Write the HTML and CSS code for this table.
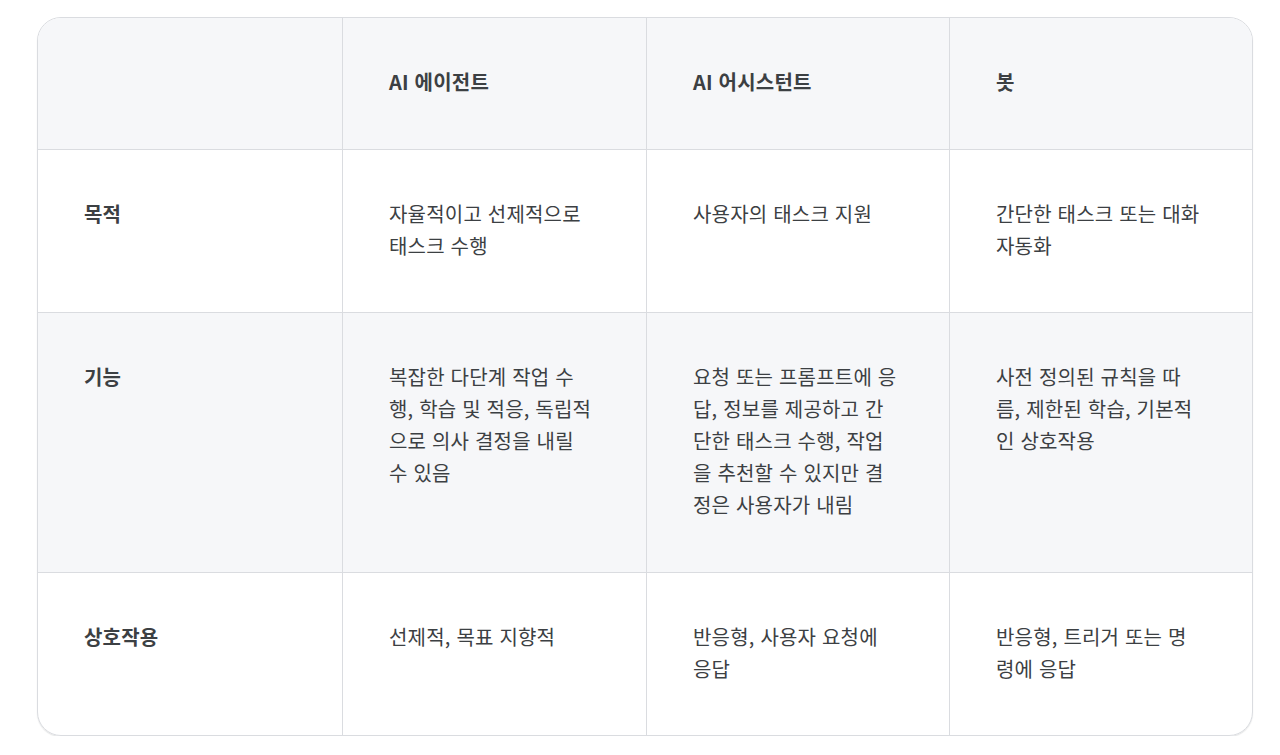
FILE: index.html
```html
<!DOCTYPE html>
<html lang="ko">
<head>
<meta charset="utf-8">
<link rel="stylesheet" href="styles.css">
</head>
<body>
<div class="wrap">
  <table class="cmp">
    <colgroup>
      <col class="c1"><col class="c2"><col class="c3"><col class="c4">
    </colgroup>
    <thead>
      <tr class="gray">
        <th></th>
        <th>AI 에이전트</th>
        <th>AI 어시스턴트</th>
        <th>봇</th>
      </tr>
    </thead>
    <tbody>
      <tr>
        <th>목적</th>
        <td>자율적이고 선제적으로 태스크 수행</td>
        <td>사용자의 태스크 지원</td>
        <td>간단한 태스크 또는 대화 자동화</td>
      </tr>
      <tr class="gray">
        <th>기능</th>
        <td>복잡한 다단계 작업 수행, 학습 및 적응, 독립적으로 의사 결정을 내릴 수 있음</td>
        <td>요청 또는 프롬프트에 응답, 정보를 제공하고 간단한 태스크 수행, 작업을 추천할 수 있지만 결정은 사용자가 내림</td>
        <td>사전 정의된 규칙을 따름, 제한된 학습, 기본적인 상호작용</td>
      </tr>
      <tr>
        <th>상호작용</th>
        <td>선제적, 목표 지향적</td>
        <td>반응형, 사용자 요청에 응답</td>
        <td>반응형, 트리거 또는 명령에 응답</td>
      </tr>
    </tbody>
  </table>
</div>
</body>
</html>
```

FILE: styles.css
```css
html, body {
  margin: 0;
  padding: 0;
  background: #ffffff;
}
body {
  padding: 17px 0 0 37px;
  font-family: "Noto Sans CJK KR", "Noto Sans", sans-serif;
  color: #3c4043;
}
.wrap {
  box-sizing: border-box;
  width: 1216px;
  border: 1px solid #dadce0;
  border-radius: 24px;
  overflow: hidden;
  box-shadow: 0 1px 1px rgba(60, 64, 67, 0.14);
}
.cmp {
  width: 100%;
  border-collapse: separate;
  border-spacing: 0;
  table-layout: fixed;
}
.c1 { width: 304px; }
.c2 { width: 304px; }
.c3 { width: 303px; }
.c4 { width: 303px; }
.cmp th, .cmp td {
  padding: 48px 51px 50.5px 46px;
  font-size: 20px;
  letter-spacing: 0.2px;
  line-height: 32px;
  text-align: left;
  vertical-align: top;
  border-left: 1px solid #dadce0;
  border-top: 1px solid #dadce0;
}
.cmp td { font-weight: 400; word-break: break-all; }
.cmp th { font-weight: 700; }
.cmp tr > :first-child { border-left: none; }
.cmp thead tr:first-child > * { border-top: none; }
.gray { background: #f6f7f9; }
```
